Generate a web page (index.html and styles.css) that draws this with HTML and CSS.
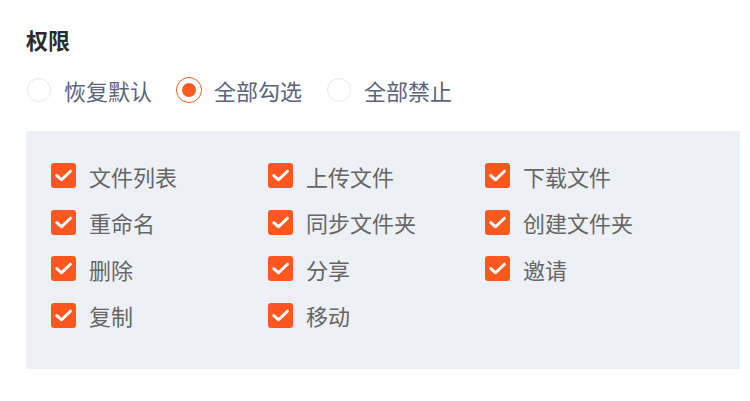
FILE: index.html
```html
<!DOCTYPE html>
<html lang="zh">
<head>
<meta charset="utf-8">
<link rel="stylesheet" href="styles.css">
</head>
<body>
<div class="wrap">
  <div class="title">权限</div>
  <div class="radios">
    <label class="radio"><span class="circle"></span><span class="rtext">恢复默认</span></label>
    <label class="radio on"><span class="circle"></span><span class="rtext">全部勾选</span></label>
    <label class="radio"><span class="circle"></span><span class="rtext">全部禁止</span></label>
  </div>
  <div class="panel">
    <div class="grid">
      <div class="item"><span class="box"><svg viewBox="0 0 25 25"><path d="M5.8 12.6l4.8 4.2 8.8-8.6" /></svg></span>文件列表</div>
      <div class="item"><span class="box"><svg viewBox="0 0 25 25"><path d="M5.8 12.6l4.8 4.2 8.8-8.6" /></svg></span>上传文件</div>
      <div class="item"><span class="box"><svg viewBox="0 0 25 25"><path d="M5.8 12.6l4.8 4.2 8.8-8.6" /></svg></span>下载文件</div>
      <div class="item"><span class="box"><svg viewBox="0 0 25 25"><path d="M5.8 12.6l4.8 4.2 8.8-8.6" /></svg></span>重命名</div>
      <div class="item"><span class="box"><svg viewBox="0 0 25 25"><path d="M5.8 12.6l4.8 4.2 8.8-8.6" /></svg></span>同步文件夹</div>
      <div class="item"><span class="box"><svg viewBox="0 0 25 25"><path d="M5.8 12.6l4.8 4.2 8.8-8.6" /></svg></span>创建文件夹</div>
      <div class="item"><span class="box"><svg viewBox="0 0 25 25"><path d="M5.8 12.6l4.8 4.2 8.8-8.6" /></svg></span>删除</div>
      <div class="item"><span class="box"><svg viewBox="0 0 25 25"><path d="M5.8 12.6l4.8 4.2 8.8-8.6" /></svg></span>分享</div>
      <div class="item"><span class="box"><svg viewBox="0 0 25 25"><path d="M5.8 12.6l4.8 4.2 8.8-8.6" /></svg></span>邀请</div>
      <div class="item"><span class="box"><svg viewBox="0 0 25 25"><path d="M5.8 12.6l4.8 4.2 8.8-8.6" /></svg></span>复制</div>
      <div class="item"><span class="box"><svg viewBox="0 0 25 25"><path d="M5.8 12.6l4.8 4.2 8.8-8.6" /></svg></span>移动</div>
    </div>
  </div>
</div>
</body>
</html>
```
FILE: styles.css
```css
html, body {
  margin: 0;
  padding: 0;
  background: #ffffff;
}
body {
  font-family: "Noto Sans CJK SC", "Noto Sans", sans-serif;
}
.wrap {
  padding: 25px 10px 0 26px;
}
.title {
  font-size: 22px;
  font-weight: 700;
  color: #2b2b2b;
  line-height: 29px;
}
.radios {
  display: flex;
  align-items: center;
  margin-top: 18px;
  height: 36px;
}
.radio {
  display: flex;
  align-items: center;
  margin-right: 24px;
}
.circle {
  width: 24px;
  height: 24px;
  border: 1px solid #e6e8ee;
  border-radius: 50%;
  box-sizing: border-box;
  margin: 0 1px;
  position: relative;
}
.radio.on .circle {
  width: 26px;
  height: 26px;
  margin: 0;
  border: 1.5px solid #fe5a1f;
}
.radio.on .circle::after {
  content: "";
  position: absolute;
  left: 50%;
  top: 50%;
  width: 14px;
  height: 14px;
  margin: -7px 0 0 -7px;
  border-radius: 50%;
  background: #fe5a1f;
}
.rtext {
  font-size: 22px;
  color: #5b6479;
  margin-left: 12px;
}
.panel {
  margin-top: 23px;
  background: #edf0f5;
  height: 238px;
  box-sizing: border-box;
  padding: 32px 0 0 25px;
}
.grid {
  display: grid;
  grid-template-columns: 217px 217px 217px;
  grid-auto-rows: 46.67px;
}
.item {
  display: flex;
  align-items: center;
  height: 25px;
  font-size: 22px;
  color: #666666;
}
.box {
  width: 25px;
  height: 25px;
  border-radius: 3px;
  background: #fe561f;
  display: flex;
  margin-right: 13px;
  flex: none;
}
.box svg {
  width: 25px;
  height: 25px;
  fill: none;
  stroke: #ffffff;
  stroke-width: 3;
  stroke-linecap: round;
  stroke-linejoin: round;
}
```
